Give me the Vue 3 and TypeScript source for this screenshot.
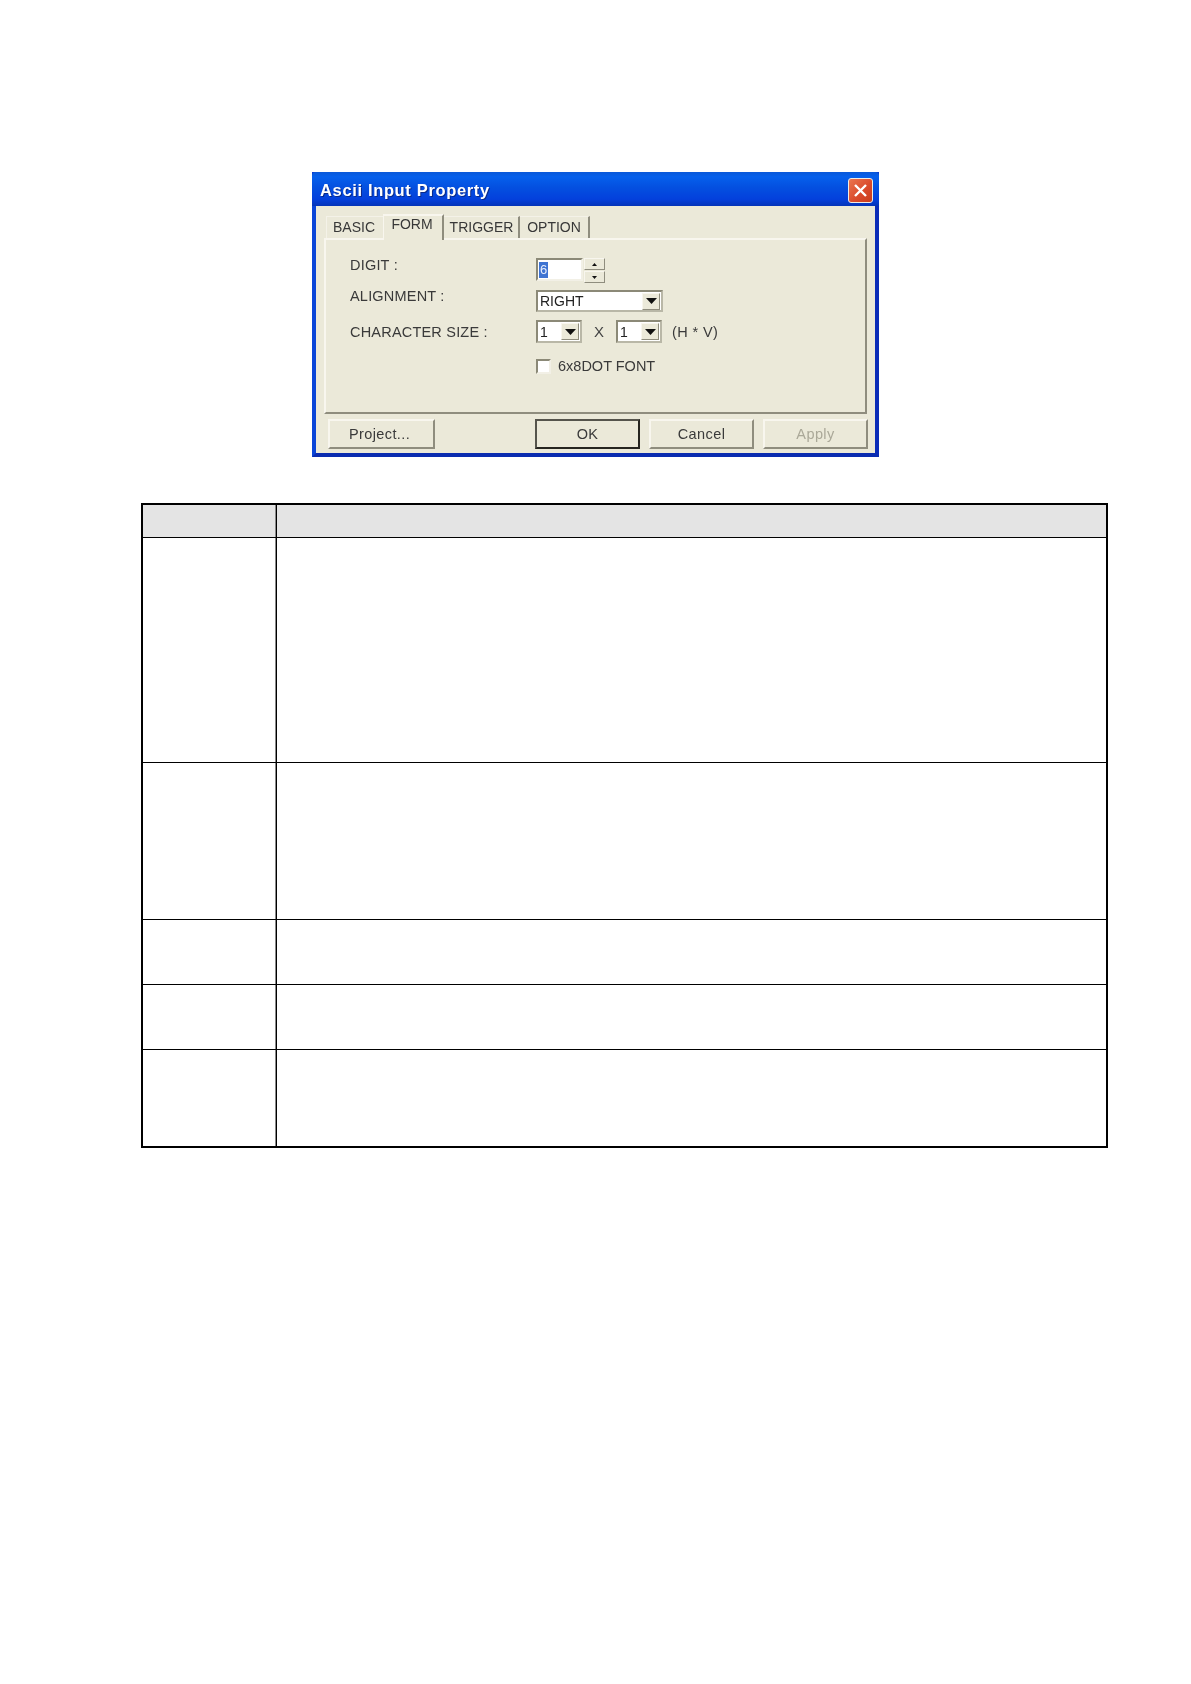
<script setup lang="ts">
const rowHeights: number[] = [225, 157, 65, 65, 96]
const tabs = [
  { label: 'BASIC', width: 57, active: false, shift: 0 },
  { label: 'FORM', width: 61, active: true, shift: 0 },
  { label: 'TRIGGER', width: 76, active: false, shift: 3 },
  { label: 'OPTION', width: 70, active: false, shift: 2 },
]
</script>

<template>
  <div class="page">
    <section class="dialog">
      <header class="title">
        <span class="title-text">Ascii Input Property</span>
        <button class="close" aria-label="Close">
          <svg width="15" height="15" viewBox="0 0 15 15"><path d="M2 2 L13 13 M13 2 L2 13" stroke="#fff" stroke-width="2.4" fill="none" /></svg>
        </button>
      </header>
      <div class="body">
        <div class="tabs">
          <div
            v-for="t in tabs"
            :key="t.label"
            class="tab"
            :class="{ active: t.active }"
            :style="{ width: t.width + 'px', paddingLeft: t.shift + 'px' }"
          >{{ t.label }}</div>
        </div>
        <div class="panel">
          <div class="row row-digit">
            <span class="label">DIGIT :</span>
            <div class="field spin-field"><span class="sel">6</span></div>
            <div class="spin">
              <div class="spin-btn"><svg width="5" height="3" viewBox="0 0 5 3"><path d="M2.5 0 L5 3 H0 Z" fill="#111" /></svg></div>
              <div class="spin-btn"><svg width="5" height="3" viewBox="0 0 5 3"><path d="M0 0 H5 L2.5 3 Z" fill="#111" /></svg></div>
            </div>
          </div>
          <div class="row row-align">
            <span class="label">ALIGNMENT :</span>
            <div class="field combo combo-wide">
              <span class="value">RIGHT</span>
              <div class="drop"><svg width="11" height="6" viewBox="0 0 11 6"><path d="M0 0 H11 L5.5 6 Z" fill="#111" /></svg></div>
            </div>
          </div>
          <div class="row row-size">
            <span class="label">CHARACTER SIZE :</span>
            <div class="field combo combo-small">
              <span class="value">1</span>
              <div class="drop"><svg width="11" height="6" viewBox="0 0 11 6"><path d="M0 0 H11 L5.5 6 Z" fill="#111" /></svg></div>
            </div>
            <span class="times">X</span>
            <div class="field combo combo-small">
              <span class="value">1</span>
              <div class="drop"><svg width="11" height="6" viewBox="0 0 11 6"><path d="M0 0 H11 L5.5 6 Z" fill="#111" /></svg></div>
            </div>
            <span class="hv">(H * V)</span>
          </div>
          <div class="row row-font">
            <span class="label"></span>
            <div class="check"></div>
            <span class="check-label">6x8DOT FONT</span>
          </div>
        </div>
        <div class="buttons">
          <button class="btn project">Project...</button>
          <div class="btn-group">
            <button class="btn default">OK</button>
            <button class="btn cancel">Cancel</button>
            <button class="btn disabled">Apply</button>
          </div>
        </div>
      </div>
    </section>

    <table class="spec">
      <thead>
        <tr class="head-row">
          <th class="c1"></th>
          <th class="c2"></th>
        </tr>
      </thead>
      <tbody>
        <tr v-for="(h, i) in rowHeights" :key="i" :style="{ height: h + 'px' }">
          <td class="c1"></td>
          <td class="c2"></td>
        </tr>
      </tbody>
    </table>
  </div>
</template>

<style>
html, body { background: #fff; }
</style>

<style scoped>
.page {
  min-height: 1684px;
  box-sizing: border-box;
  padding: 172px 0 0 141px;
  background: #fff;
  font-family: "Liberation Sans", Arial, sans-serif;
}
.dialog {
  width: 567px;
  height: 285px;
  margin-left: 171px;
  display: flex;
  flex-direction: column;
  box-sizing: border-box;
  background: #0a3ad0;
  color: #333;
  font-size: 14.5px;
  filter: blur(0.4px);
}
.title {
  height: 34px;
  flex: none;
  box-sizing: border-box;
  display: flex;
  align-items: center;
  justify-content: space-between;
  padding: 2px 6px 0 8px;
  border-radius: 4px 4px 0 0;
  background: linear-gradient(180deg, #0a58d8 0%, #0660ec 14%, #0450e0 45%, #0440dc 80%, #0434b8 100%);
}
.title-text {
  color: #fff;
  font-weight: 700;
  font-size: 16.5px;
  letter-spacing: 0.65px;
  text-shadow: 1px 1px 0 #0a2a8a;
}
.close {
  width: 25px;
  height: 25px;
  padding: 0;
  display: flex;
  align-items: center;
  justify-content: center;
  border: 1px solid #f0ece4;
  border-radius: 3px;
  background: linear-gradient(135deg, #ea7650, #d9482a 60%, #c93c1c);
}
.body {
  flex: 1;
  min-height: 0;
  box-sizing: border-box;
  display: flex;
  flex-direction: column;
  background: #ebe9d9;
  border-left: 4px solid #0a45d8;
  border-right: 4px solid #0a2cb8;
  border-bottom: 4px solid #0a2cb0;
  padding: 0 0 0 8px;
}
.tabs {
  height: 32px;
  flex: none;
  display: flex;
  align-items: flex-end;
  padding: 0 0 0 2px;
  box-sizing: border-box;
}
.tab {
  height: 22px;
  box-sizing: border-box;
  display: flex;
  align-items: center;
  justify-content: center;
  padding: 0 2px 2px 0;
  color: #383838;
  font-size: 14px;
  border-right: 2px solid #8f8d7e;
  border-top: 1px solid #f4f2e8;
}
.tab:first-child {
  border-right: none;
  border-left: 1px solid #f4f2e8;
}
.tab.active {
  height: 26px;
  margin-bottom: -2px;
  padding-bottom: 8px;
  border-left: 1px solid #f8f6ee;
  border-top: 2px solid #f8f6ee;
  position: relative;
  z-index: 1;
  background: #ebe9d9;
}
.panel {
  width: 543px;
  height: 176px;
  flex: none;
  box-sizing: border-box;
  padding: 18px 0 0 24px;
  border: 2px solid;
  border-color: #f8f6ee #8f8d7e #8f8d7e #f8f6ee;
  display: flex;
  flex-direction: column;
}
.row {
  display: flex;
  align-items: center;
}
.label {
  width: 186px;
  flex: none;
  line-height: 16px;
  color: #3a3a3a;
  letter-spacing: 0.2px;
}
.row-digit { height: 25px; align-items: flex-start; }
.row-digit .label { margin-top: -1px; }
.row-align { height: 22px; margin-top: 7px; align-items: flex-start; }
.row-align .label { margin-top: -2px; }
.row-size { height: 23px; margin-top: 8px; }
.row-font { height: 15px; margin-top: 16px; }
.field {
  box-sizing: border-box;
  background: #fff;
  border: 2px solid;
  border-color: #8b8977 #f2f0e6 #f2f0e6 #8b8977;
  display: flex;
  align-items: center;
}
.spin-field {
  width: 47px;
  height: 23px;
  padding-left: 1px;
}
.sel {
  width: 9px;
  height: 16px;
  background: #3f74d2;
  color: #e8eefc;
  line-height: 16px;
  text-align: center;
  font-size: 13px;
}
.spin {
  margin-left: 1px;
  width: 21px;
  height: 25px;
  display: flex;
  flex-direction: column;
  justify-content: space-between;
}
.spin-btn {
  height: 12px;
  box-sizing: border-box;
  display: flex;
  align-items: center;
  justify-content: center;
  border: 1px solid;
  border-color: #f8f6ee #8f8d7e #8f8d7e #f8f6ee;
  background: #ebe9d9;
}
.combo {
  height: 100%;
  justify-content: space-between;
  padding: 0 1px 0 2px;
  border-color: #8b8977 #b9b7a7 #b9b7a7 #8b8977;
}
.combo-wide { width: 127px; }
.combo-small { width: 46px; }
.value { color: #222; font-size: 14px; }
.drop {
  width: 18px;
  height: 17px;
  box-sizing: border-box;
  display: flex;
  align-items: center;
  justify-content: center;
  background: #ebe9d9;
  border: 1px solid;
  border-color: #f8f6ee #8f8d7e #8f8d7e #f8f6ee;
}
.times {
  width: 34px;
  text-align: center;
  font-size: 15px;
  color: #444;
}
.hv {
  margin-left: 10px;
  color: #3a3a3a;
  letter-spacing: 0.4px;
}
.check {
  width: 15px;
  height: 15px;
  box-sizing: border-box;
  background: #fff;
  border: 2px solid;
  border-color: #8b8977 #f2f0e6 #f2f0e6 #8b8977;
}
.check-label {
  margin-left: 7px;
  margin-top: -2px;
  color: #3a3a3a;
}
.buttons {
  flex: 1;
  display: flex;
  justify-content: space-between;
  padding: 5px 7px 4px 4px;
  min-height: 0;
}
.btn-group {
  display: flex;
  gap: 9px;
}
.btn {
  width: 105px;
  height: 30px;
  padding: 0;
  box-sizing: border-box;
  background: #ebe9d9;
  border: 2px solid;
  border-color: #f8f6ee #8f8d7e #8f8d7e #f8f6ee;
  color: #3a3a3a;
  font: 14.5px "Liberation Sans", Arial, sans-serif;
  letter-spacing: 0.4px;
}
.btn.project { width: 107px; padding-right: 4px; }
.btn.default {
  border-color: #55544c #262520 #262520 #55544c;
}
.btn.disabled {
  color: #aaa898;
}
.spec {
  margin-top: 46px;
  width: 967px;
  box-sizing: border-box;
  table-layout: fixed;
  border-collapse: separate;
  border-spacing: 0;
  border: 2px solid #000;
}
.head-row { height: 33px; }
.head-row th {
  background: #e4e4e4;
  padding: 0;
}
.spec td { padding: 0; }
.c1 {
  width: 134px;
  box-sizing: border-box;
  border-right: 1px solid #000;
  border-bottom: 1px solid #000;
  box-shadow: inset -1px 0 0 #888;
}
.c2 {
  border-bottom: 1px solid #000;
}
.spec tbody tr:last-child td { border-bottom: none; }
</style>
